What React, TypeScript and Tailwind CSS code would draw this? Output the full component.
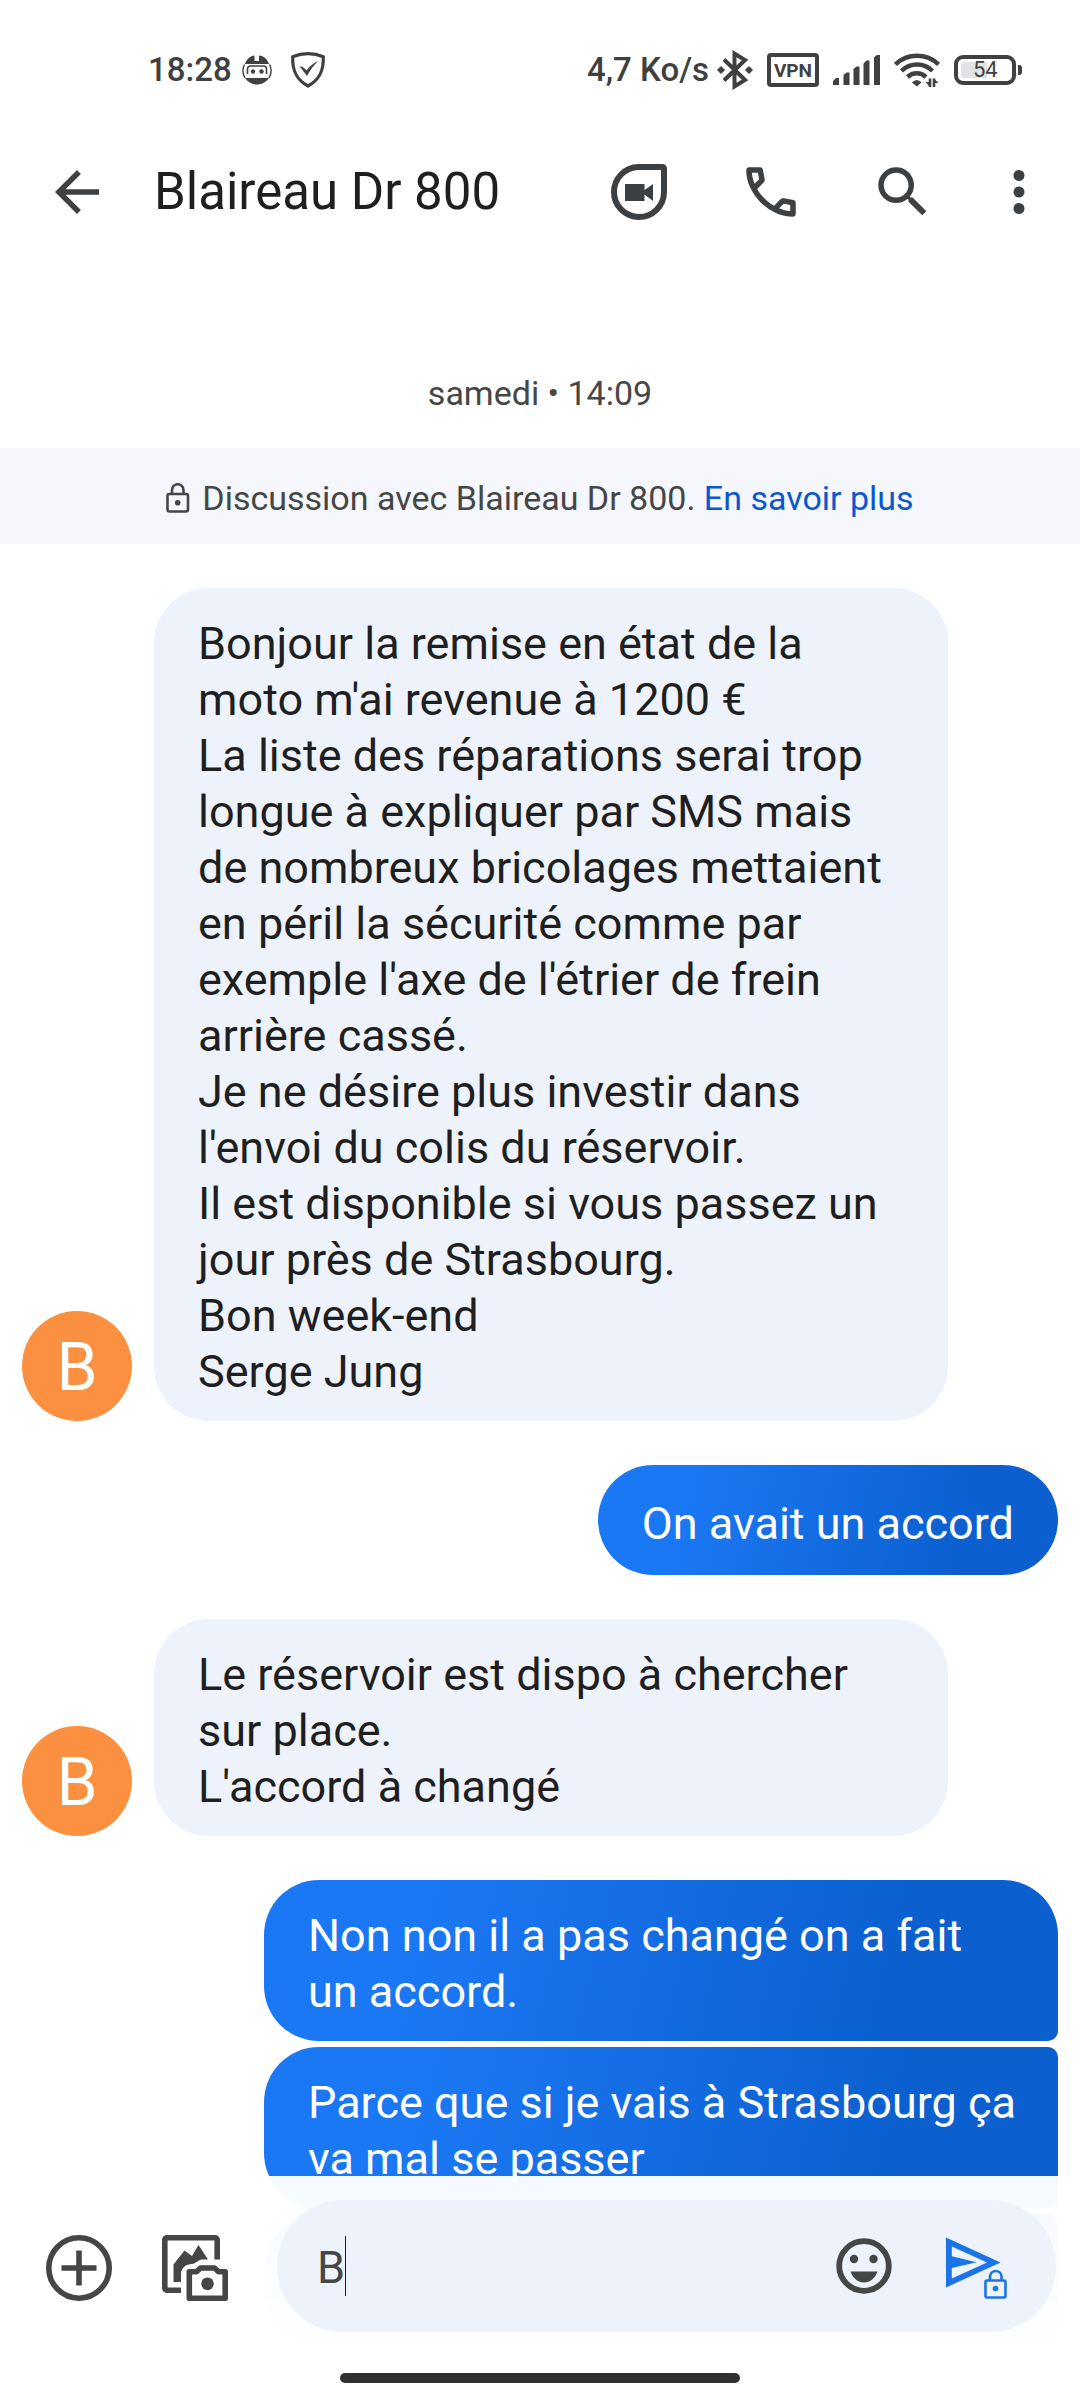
import React, { useState } from 'react';
import clsx from 'clsx';

interface Message {
  id: number;
  from: 'contact' | 'me';
  text: string;
  position?: 'first' | 'middle';
}

const messages: Message[] = [
  {
    id: 1,
    from: 'contact',
    text: "Bonjour la remise en état de la moto m'ai revenue à 1200 €\nLa liste des réparations serai trop longue à expliquer par SMS mais de nombreux bricolages mettaient en péril la sécurité comme par exemple l'axe de l'étrier de frein arrière cassé.\nJe ne désire plus investir dans l'envoi du colis du réservoir.\nIl est disponible si vous passez un jour près de Strasbourg.\nBon week-end\nSerge Jung",
  },
  { id: 2, from: 'me', text: 'On avait un accord' },
  { id: 3, from: 'contact', text: "Le réservoir est dispo à chercher sur place.\nL'accord à changé" },
  { id: 4, from: 'me', text: 'Non non il a pas changé on a fait un accord.', position: 'first' },
  { id: 5, from: 'me', text: 'Parce que si je vais à Strasbourg ça va mal se passer', position: 'middle' },
];

function RobotIcon() {
  return (
    <svg width="30" height="30" viewBox="0 0 30 30" aria-hidden="true">
      <path d="M3 9C5 3.500 8 1 12.500 0.500V6H17V0.500C22 1 25 3.500 27 9Z" fill="#404040" />
      <path d="M3 23H27C24 27.500 19 29.500 15 29.500S6 27.500 3 23Z" fill="#404040" />
      <path d="M2.500 9.500A14 14 0 0 0 3 23M27.500 9.500A14 14 0 0 1 27 23" fill="none" stroke="#404040" strokeWidth="1.400" />
      <path d="M5.500 19V14A3 3 0 0 1 8.500 11H21.500A3 3 0 0 1 24.500 14V19" fill="none" stroke="#404040" strokeWidth="1.600" />
      <circle cx="11" cy="16.500" r="2.200" fill="#404040" />
      <circle cx="19.500" cy="16.500" r="2.200" fill="#404040" />
    </svg>
  );
}

function ShieldIcon() {
  return (
    <svg width="36" height="36" viewBox="0 0 36 36" aria-hidden="true">
      <path d="M18 1.700C23 1.700 29 3 33.300 4.800C33.800 18 30 27.500 18 34C6 27.500 2.200 18 2.700 4.800C7 3 13 1.700 18 1.700Z" fill="none" stroke="#404040" strokeWidth="3.200" />
      <path d="M9.500 14.500C12 14 14 15.500 16.500 18.500C20 14 24 10.500 28 9C24 13 20 18 17 24C14.500 20.500 12 17 9.500 14.500Z" fill="#404040" />
    </svg>
  );
}

function BluetoothIcon() {
  return (
    <svg width="36" height="40" viewBox="0 0 36 40" aria-hidden="true">
      <path d="M7 9.500L28 30L17.500 36.500V3.500L28 10L7 30.500" fill="none" stroke="#404040" strokeWidth="4" />
      <path d="M4 16.500L7.500 20L4 23.500L0.500 20ZM32 16.500L35.500 20L32 23.500L28.500 20Z" fill="#404040" stroke="#404040" />
    </svg>
  );
}

function SignalIcon() {
  return (
    <svg width="47" height="32" viewBox="0 0 47 32" fill="#404040" aria-hidden="true">
      <path d="M0 31V27L3 24H6V31ZM10.500 31V21L13.500 18.500H16.500V31ZM20.500 31V15L23.500 12.500H26.500V31ZM30.500 31V9.500L33.500 6.500H36.500V31ZM41 31V3.500L44 1H47V31Z" />
    </svg>
  );
}

function WifiIcon() {
  return (
    <svg width="46" height="36" viewBox="0 0 46 36" fill="none" stroke="#404040" strokeWidth="4.500" aria-hidden="true">
      <path d="M1.500 12.500A31 31 0 0 1 44.500 12.500" />
      <path d="M7.500 19A22 22 0 0 1 38.500 19" />
      <path d="M13.500 25A13.500 13.500 0 0 1 32 25" />
      <path d="M18 30.500Q22.800 25.500 27.500 30.500L22.800 34.500Z" fill="#404040" stroke="none" />
      <path d="M36 26.500V35M40 35V26.500" strokeWidth="2.600" />
      <path d="M31.500 30L36 35V30ZM44.500 31L40 26.500V31Z" fill="#404040" stroke="none" />
    </svg>
  );
}

function BatteryIcon() {
  return (
    <div className="flex items-center gap-[2px]">
      <div className="flex h-[30px] w-[62px] items-center rounded-[9px] border-4 border-[#404040] p-[3px]">
        <div className="flex h-[16px] w-[26px] items-center rounded-l-[3px] bg-[#e2e2e2]">
          <span className="pl-[12px] text-[22px] leading-none font-normal text-[#404040]">54</span>
        </div>
      </div>
      <div className="h-[10px] w-[4px] rounded-r-[3px] bg-[#404040]" />
    </div>
  );
}

function LockIcon({ className }: { className?: string }) {
  return (
    <svg width="24" height="30" viewBox="0 0 24 30" fill="none" stroke="currentColor" className={className} aria-hidden="true">
      <rect x="1.500" y="11" width="20.500" height="17.500" rx="2" strokeWidth="2.600" />
      <path d="M6 11V7A5.700 5.700 0 0 1 17.500 7V11" strokeWidth="2.600" />
      <circle cx="11.700" cy="19.800" r="2.800" fill="currentColor" stroke="none" />
    </svg>
  );
}

function DuoIcon() {
  return (
    <svg width="56" height="56" viewBox="0 0 56 56" aria-hidden="true">
      <path d="M27.500 3H51.500A1.500 1.500 0 0 1 53 4.500V28.500A25 25 0 0 1 28 53A25 25 0 0 1 3 28A25 25 0 0 1 27.500 3Z" fill="none" stroke="#3c4043" strokeWidth="6" />
      <path d="M14 20H33.500V26L42 20V37L33.500 30.500V37H14Z" fill="#3c4043" />
    </svg>
  );
}

function GalleryCameraIcon() {
  return (
    <svg width="66" height="66" viewBox="0 0 66 66" fill="none" stroke="#444746" aria-hidden="true">
      <path d="M55.200 24.500V4.800A2 2 0 0 0 53.200 2.800H4.800A2 2 0 0 0 2.800 4.800V53.200A2 2 0 0 0 4.800 55.200H19" strokeWidth="5.600" />
      <path d="M11.500 47V29.500L22.500 15.500L30 21L36.500 10L46 24.500H40C36 24.500 34 29 30 29C24 29 19 33 19 39V47Z" fill="#444746" stroke="none" />
      <path d="M27.300 36.800H34.500L38.500 33H52.500L56.500 36.800H63.200V63.200H27.300Z" strokeWidth="5.600" strokeLinejoin="round" />
      <circle cx="45.500" cy="48.700" r="6.300" fill="#444746" stroke="none" />
    </svg>
  );
}

function StatusBar() {
  return (
    <div className="flex h-[140px] items-center justify-between pr-[58px] pl-[148px] text-[33px] font-medium text-[#404040]">
      <div className="flex items-center gap-[10px]">
        <span>18:28</span>
        <RobotIcon />
        <span className="pl-[8px]">
          <ShieldIcon />
        </span>
      </div>
      <div className="flex items-center gap-[14px]">
        <div className="flex items-center gap-[8px]">
          <span>4,7 Ko/s</span>
          <BluetoothIcon />
        </div>
        <div className="flex h-[34px] w-[52px] items-center justify-center rounded-[4px] border-4 border-[#404040] text-[19px] leading-none font-bold">
          VPN
        </div>
        <SignalIcon />
        <WifiIcon />
        <BatteryIcon />
      </div>
    </div>
  );
}

function Header() {
  return (
    <header className="flex h-[104px] items-center pr-[11px]">
      <button type="button" aria-label="Retour" className="flex w-[154px] shrink-0 pl-[44px]">
        <svg width="66" height="66" viewBox="0 0 24 24" fill="#3c4043" aria-hidden="true">
          <path d="M20 11H7.830l5.590-5.590L12 4l-8 8 8 8 1.410-1.410L7.830 13H20v-2z" />
        </svg>
      </button>
      <h1 className="min-w-0 flex-1 truncate text-[51px] text-[#1f1f1f]">Blaireau Dr 800</h1>
      <button type="button" aria-label="Appel vidéo" className="flex w-[132px] shrink-0 justify-center">
        <DuoIcon />
      </button>
      <button type="button" aria-label="Appeler" className="flex w-[132px] shrink-0 justify-center">
        <svg width="66" height="66" viewBox="0 0 24 24" fill="#3c4043" aria-hidden="true">
          <path d="M19.950 21q-3.125 0-6.175-1.362-3.050-1.363-5.550-3.863-2.500-2.500-3.862-5.550Q3 7.175 3 4.050q0-.450.300-.750t.750-.300H8.100q.350 0 .625.237.275.238.325.563l.650 3.500q.050.400-.025.675-.075.275-.275.475L6.975 10.900q.500.925 1.187 1.787.688.863 1.513 1.663.775.775 1.625 1.438.850.662 1.800 1.212l2.350-2.350q.225-.225.588-.337.362-.113.712-.063l3.450.700q.350.100.575.363.225.262.225.587v4.050q0 .450-.300.750t-.750.300ZM6.025 9l1.650-1.650L7.250 5H5.025q.125 1.025.350 2.025.225 1 .650 1.975Zm8.950 8.950q.975.425 1.988.675 1.012.250 2.037.325v-2.200l-2.350-.475Z" />
        </svg>
      </button>
      <button type="button" aria-label="Rechercher" className="flex w-[132px] shrink-0 justify-center">
        <svg width="66" height="66" viewBox="0 0 24 24" fill="#3c4043" aria-hidden="true">
          <path d="M15.500 14h-.790l-.280-.270A6.471 6.471 0 0 0 16 9.500 6.500 6.500 0 1 0 9.500 16c1.610 0 3.090-.590 4.230-1.570l.270.280v.790l5 4.990L20.490 19l-4.990-5zm-6 0C7.010 14 5 11.990 5 9.500S7.010 5 9.500 5 14 7.010 14 9.500 11.990 14 9.500 14z" />
        </svg>
      </button>
      <button type="button" aria-label="Plus d'options" className="flex w-[100px] shrink-0 justify-center">
        <svg width="66" height="66" viewBox="0 0 24 24" fill="#3c4043" aria-hidden="true">
          <circle cx="12" cy="6" r="2" />
          <circle cx="12" cy="12" r="2" />
          <circle cx="12" cy="18" r="2" />
        </svg>
      </button>
    </header>
  );
}

function MessageRow({ message }: { message: Message }) {
  const bubble = 'pt-[28px] pb-[21px] pl-[44px] whitespace-pre-line';

  if (message.from === 'contact') {
    return (
      <li className="mt-[44px] flex items-end gap-[22px] pr-[132px] pl-[22px]">
        <div className="flex size-[110px] shrink-0 items-center justify-center rounded-full bg-[#fb9140] pt-[4px] text-[66px] leading-none text-white">
          B
        </div>
        <p className={clsx(bubble, 'min-w-0 flex-1 rounded-[55px] bg-[#edf2fb] pr-[44px] text-[#1f1f1f]')}>{message.text}</p>
      </li>
    );
  }

  return (
    <li className={clsx('flex justify-end pr-[22px] pl-[264px]', message.position === 'middle' ? 'mt-[6px]' : 'mt-[44px]')}>
      <p
        className={clsx(
          bubble,
          'flex min-h-[110px] items-center bg-[linear-gradient(104deg,#1b78f4_20%,#0b5fcf_80%)] text-white',
          !message.position && 'rounded-[55px] pr-[44px]',
          message.position === 'first' && 'rounded-[55px] rounded-br-[10px] pr-[44px]',
          message.position === 'middle' && 'rounded-l-[55px] rounded-r-[10px] pr-[32px]'
        )}
      >
        {message.text}
      </p>
    </li>
  );
}

function Composer() {
  const [draft, setDraft] = useState('B');

  return (
    <footer className="fixed inset-x-0 bottom-0 bg-[linear-gradient(to_bottom,rgba(255,255,255,0.96),rgba(255,255,255,0.99)_50%,#fff_80%)] pt-[24px] pb-[17px]">
      <div className="flex items-center pr-[24px] pl-[46px]">
        <button type="button" aria-label="Ajouter" className="mr-[50px] shrink-0 pt-[4px]">
          <svg width="66" height="66" viewBox="0 0 66 66" fill="none" stroke="#444746" strokeWidth="5.600" aria-hidden="true">
            <circle cx="33" cy="33" r="30.200" />
            <path d="M33 15.500V50.500M15.500 33H50.500" />
          </svg>
        </button>
        <button type="button" aria-label="Galerie et appareil photo" className="mr-[49px] shrink-0 pt-[4px]">
          <GalleryCameraIcon />
        </button>
        <div className="flex h-[132px] min-w-0 flex-1 items-center rounded-full bg-[#edf2fb] pr-[48px] pl-[40px]">
          <div className="flex min-w-0 flex-1 items-center">
            <input
              type="text"
              aria-label="Message"
              value={draft}
              onChange={(e) => setDraft(e.target.value)}
              className="field-sizing-content max-w-full pt-[4px] text-[45px] leading-[60px] text-[#444746] outline-none"
            />
            <span className="h-[60px] w-px bg-[#1f1f1f]" />
          </div>
          <button type="button" aria-label="Emoji" className="mr-[54px] shrink-0">
            <svg width="56" height="56" viewBox="0 0 56 56" fill="#444746" aria-hidden="true">
              <circle cx="28" cy="28" r="24.800" fill="none" stroke="#444746" strokeWidth="5.800" />
              <circle cx="18" cy="21" r="4.200" />
              <circle cx="37.500" cy="21" r="4.200" />
              <path d="M14.500 33.500H41.500C39.500 40 34 44.500 28 44.500S16.500 40 14.500 33.500Z" />
            </svg>
          </button>
          <button type="button" aria-label="Envoyer" className="shrink-0 pt-[4px]">
            <svg width="62" height="62" viewBox="0 0 62 62" fill="#1b73e8" aria-hidden="true">
              <path fillRule="evenodd" d="M0 0.500L54.500 25.500L0 50.500ZM5.800 9.500V19.300L30.500 25.300L5.800 31V41.500L41 25.500Z" />
              <g fill="none" stroke="#1b73e8" strokeWidth="2.600">
                <rect x="39.500" y="43.500" width="20" height="17" rx="1.500" />
                <path d="M44 43V39A5.800 5.800 0 0 1 55.500 39V43" />
              </g>
              <circle cx="49.500" cy="51.500" r="2.800" />
            </svg>
          </button>
        </div>
      </div>
      <div className="mx-auto mt-[41px] h-[10px] w-[400px] rounded-full bg-[#303030]" />
    </footer>
  );
}

export default function App() {
  return (
    <div className="h-screen overflow-hidden bg-white font-['Roboto',sans-serif]">
      <StatusBar />
      <Header />
      <main>
        <p className="pt-[127px] pb-[33px] text-center text-[34px] leading-[44px] text-[#444746]">samedi • 14:09</p>
        <div className="flex min-h-[96px] items-center justify-center gap-[12px] bg-[#f5f7fc] pt-[4px] text-[34px] text-[#444746]">
          <LockIcon />
          <p>
            Discussion avec Blaireau Dr 800.{' '}
            <a href="#en-savoir-plus" className="text-[#0b57d0]">
              En savoir plus
            </a>
          </p>
        </div>
        <ul className="text-[45px] leading-[56px]">
          {messages.map((message) => (
            <MessageRow key={message.id} message={message} />
          ))}
          {/* next bubble of the group, scrolled under the composer */}
          <li className="mt-[6px] pr-[22px] pl-[264px]">
            <div className="h-[130px] rounded-l-[55px] rounded-r-[10px] bg-[linear-gradient(104deg,#1b78f4_20%,#0b5fcf_80%)]" />
          </li>
        </ul>
      </main>
      <Composer />
    </div>
  );
}
